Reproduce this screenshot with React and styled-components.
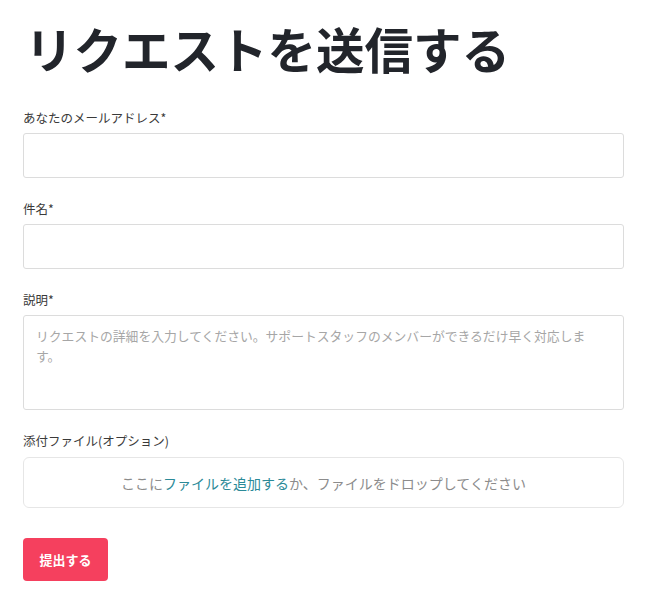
import React from "react";
import styled, { createGlobalStyle } from "styled-components";

const GlobalStyle = createGlobalStyle`
  body {
    margin: 0;
    background: #fff;
    font-family: "Noto Sans CJK JP", "Noto Sans", sans-serif;
    color: #333;
  }
`;

const Container = styled.div`
  width: 601px;
  padding-left: 23px;
`;

const Title = styled.h1`
  margin: 18px 0 31px 2px;
  font-size: 48.5px;
  line-height: 60px;
  font-weight: 700;
  color: #22252b;
`;

const Field = styled.div`
  display: flex;
  flex-direction: column;
  margin-bottom: ${(p) => p.gap || 22}px;
`;

const Label = styled.label`
  font-size: 12.5px;
  line-height: 18px;
  color: #3a3a3a;
  margin-bottom: ${(p) => p.gap || 6}px;
`;

const Input = styled.input`
  box-sizing: border-box;
  width: 100%;
  height: 45px;
  border: 1px solid #dcdcdc;
  border-radius: 3px;
  padding: 0 12px;
  font-family: inherit;
  font-size: 13px;
  outline: none;
`;

const TextArea = styled.textarea`
  box-sizing: border-box;
  width: 100%;
  height: 95px;
  border: 1px solid #dcdcdc;
  border-radius: 3px;
  padding: 10px 24px 10px 12px;
  font-family: inherit;
  font-size: 12.8px;
  line-height: 20px;
  resize: none;
  outline: none;
  &::placeholder {
    color: #a6a6a6;
  }
`;

const DropZone = styled.div`
  box-sizing: border-box;
  height: 51px;
  border: 1px solid #e6e6e6;
  border-radius: 6px;
  display: flex;
  align-items: center;
  justify-content: center;
  font-size: 14px;
  color: #8c8c8c;
`;

const FileLink = styled.a`
  color: #2b8a98;
  text-decoration: none;
  cursor: pointer;
`;

const SubmitButton = styled.button`
  width: 85px;
  height: 43px;
  border: none;
  border-radius: 4px;
  background: #f5405e;
  color: #fff;
  font-family: inherit;
  font-size: 13px;
  font-weight: 700;
  cursor: pointer;
`;

const App = () => {
  return (
    <Container>
      <GlobalStyle />
      <Title>リクエストを送信する</Title>
      <Field>
        <Label>あなたのメールアドレス*</Label>
        <Input type="email" />
      </Field>
      <Field>
        <Label>件名*</Label>
        <Input type="text" />
      </Field>
      <Field>
        <Label>説明*</Label>
        <TextArea placeholder="リクエストの詳細を入力してください。サポートスタッフのメンバーができるだけ早く対応します。" />
      </Field>
      <Field gap={30}>
        <Label gap={7}>添付ファイル(オプション)</Label>
        <DropZone>
          ここに<FileLink>ファイルを追加する</FileLink>か、ファイルをドロップしてください
        </DropZone>
      </Field>
      <SubmitButton>提出する</SubmitButton>
    </Container>
  );
};

export default App;
